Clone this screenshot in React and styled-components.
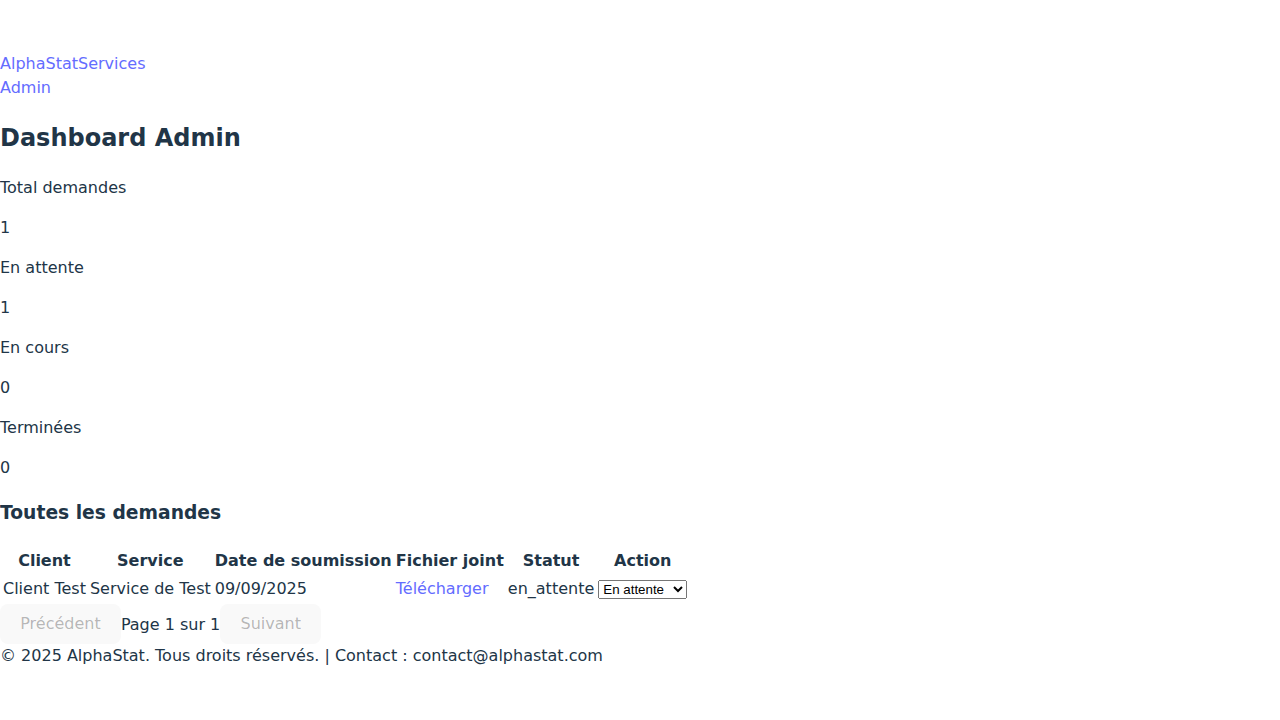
import React from "react";
import styled, { createGlobalStyle } from "styled-components";

const Global = createGlobalStyle`
  :root {
    font-family: "DejaVu Sans", sans-serif;
    line-height: 1.5;
    font-weight: 400;
    color: #213547;
    background-color: #ffffff;
  }
  body {
    margin: 0;
    display: flex;
    align-items: center;
    min-width: 320px;
    min-height: 100vh;
  }
`;

const Nav = styled.nav`
  display: flex;
  flex-direction: column;
  align-items: flex-start;
`;

const NavLink = styled.a`
  font-weight: 500;
  color: #646cff;
  text-decoration: none;
  cursor: pointer;
`;

const Title = styled.h2`
  font-size: 1.5em;
  font-weight: bold;
  margin: 0.83em 0;
`;

const SubTitle = styled.h3`
  font-size: 1.17em;
  font-weight: bold;
  margin: 1em 0;
`;

const Stat = styled.div``;

const Text = styled.p`
  margin: 1em 0;
`;

const Table = styled.table`
  border-collapse: separate;
  border-spacing: 2px;
`;

const Th = styled.th`
  padding: 1px;
  font-weight: bold;
  text-align: center;
`;

const Td = styled.td`
  padding: 1px;
  text-align: left;
`;

const FileLink = styled.a`
  font-weight: 500;
  color: #646cff;
  text-decoration: none;
`;

const StatusSelect = styled.select`
  width: 89px;
`;

const Pager = styled.div``;

const PagerButton = styled.button`
  border-radius: 8px;
  border: 1px solid transparent;
  padding: 0.6em 1.2em;
  font-size: 1em;
  font-weight: 500;
  font-family: inherit;
  background-color: #f9f9f9;
  cursor: pointer;
  &:disabled {
    color: rgba(16, 16, 16, 0.3);
    cursor: default;
  }
`;

const Footer = styled.footer``;

const stats = [
  ["Total demandes", 1],
  ["En attente", 1],
  ["En cours", 0],
  ["Terminées", 0],
];

export default function App() {
  return (
    <>
      <Global />
      <div>
        <Nav>
          <NavLink>AlphaStatServices</NavLink>
          <NavLink>Admin</NavLink>
        </Nav>
        <Title>Dashboard Admin</Title>
        {stats.map(([label, value]) => (
          <Stat key={label}>
            <Text>{label}</Text>
            <Text>{value}</Text>
          </Stat>
        ))}
        <SubTitle>Toutes les demandes</SubTitle>
        <Table>
          <thead>
            <tr>
              <Th>Client</Th>
              <Th>Service</Th>
              <Th>Date de soumission</Th>
              <Th>Fichier joint</Th>
              <Th>Statut</Th>
              <Th>Action</Th>
            </tr>
          </thead>
          <tbody>
            <tr>
              <Td>Client Test</Td>
              <Td>Service de Test</Td>
              <Td>09/09/2025</Td>
              <Td>
                <FileLink href="#">Télécharger</FileLink>
              </Td>
              <Td>en_attente</Td>
              <Td>
                <StatusSelect defaultValue="en_attente">
                  <option value="en_attente">En attente</option>
                  <option value="en_cours">En cours</option>
                  <option value="termine">Terminée</option>
                </StatusSelect>
              </Td>
            </tr>
          </tbody>
        </Table>
        <Pager>
          <PagerButton disabled>Précédent</PagerButton>
          <span>Page 1 sur 1</span>
          <PagerButton disabled>Suivant</PagerButton>
        </Pager>
        <Footer>© 2025 AlphaStat. Tous droits réservés. | Contact : contact@alphastat.com</Footer>
      </div>
    </>
  );
}
